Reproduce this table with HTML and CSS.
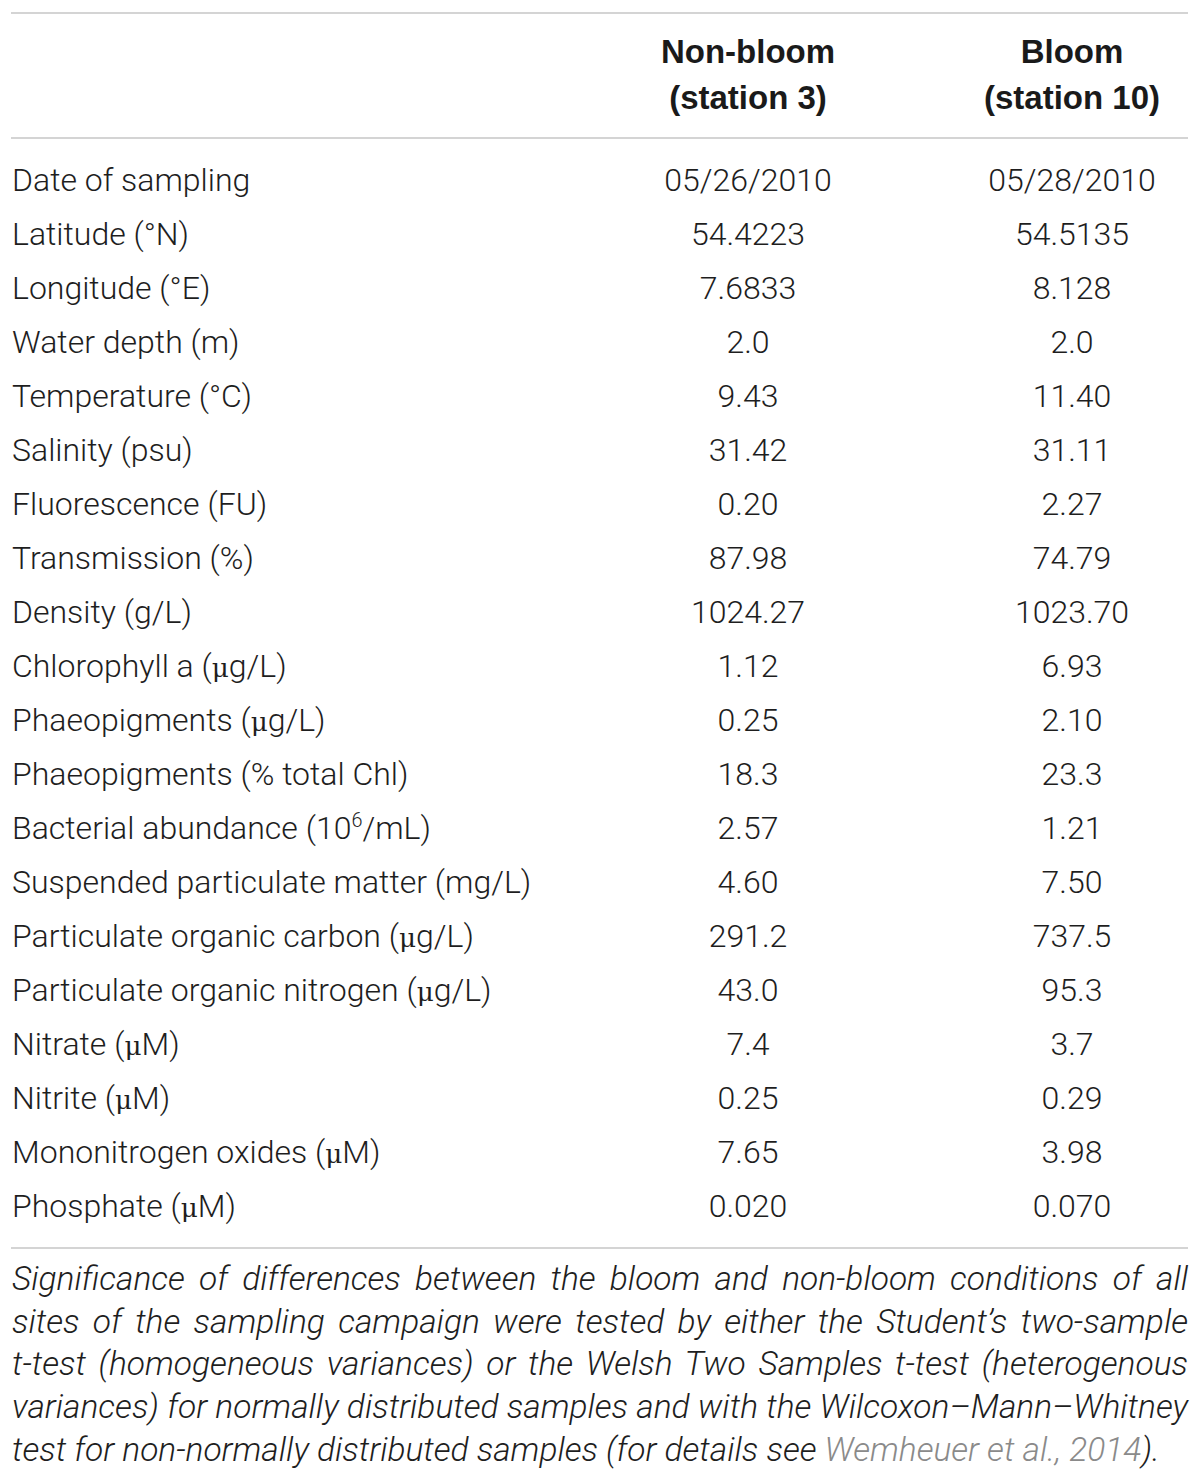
FILE: index.html
```html
<!DOCTYPE html>
<html lang="en">

<head>
    <meta charset="UTF-8">
    <meta name="viewport" content="width=device-width, initial-scale=1.0">
    <title>Sampling sites</title>
    <link rel="stylesheet" href="styles.css">
</head>

<body>
    <div class="table-wrap">

        <div class="row head-row">
            <div class="cell label"></div>
            <div class="cell value">Non-bloom<br>(station 3)</div>
            <div class="cell value">Bloom<br>(station 10)</div>
        </div>

        <div class="body-rows">
            <div class="row"><div class="cell label">Date of sampling</div><div class="cell value">05/26/2010</div><div class="cell value">05/28/2010</div></div>
            <div class="row"><div class="cell label">Latitude (°N)</div><div class="cell value">54.4223</div><div class="cell value">54.5135</div></div>
            <div class="row"><div class="cell label">Longitude (°E)</div><div class="cell value">7.6833</div><div class="cell value">8.128</div></div>
            <div class="row"><div class="cell label">Water depth (m)</div><div class="cell value">2.0</div><div class="cell value">2.0</div></div>
            <div class="row"><div class="cell label">Temperature (°C)</div><div class="cell value">9.43</div><div class="cell value">11.40</div></div>
            <div class="row"><div class="cell label">Salinity (psu)</div><div class="cell value">31.42</div><div class="cell value">31.11</div></div>
            <div class="row"><div class="cell label">Fluorescence (FU)</div><div class="cell value">0.20</div><div class="cell value">2.27</div></div>
            <div class="row"><div class="cell label">Transmission (%)</div><div class="cell value">87.98</div><div class="cell value">74.79</div></div>
            <div class="row"><div class="cell label">Density (g/L)</div><div class="cell value">1024.27</div><div class="cell value">1023.70</div></div>
            <div class="row"><div class="cell label">Chlorophyll a (<span class="mu">μ</span>g/L)</div><div class="cell value">1.12</div><div class="cell value">6.93</div></div>
            <div class="row"><div class="cell label">Phaeopigments (<span class="mu">μ</span>g/L)</div><div class="cell value">0.25</div><div class="cell value">2.10</div></div>
            <div class="row"><div class="cell label">Phaeopigments (% total Chl)</div><div class="cell value">18.3</div><div class="cell value">23.3</div></div>
            <div class="row"><div class="cell label">Bacterial abundance (10<sup>6</sup>/mL)</div><div class="cell value">2.57</div><div class="cell value">1.21</div></div>
            <div class="row"><div class="cell label">Suspended particulate matter (mg/L)</div><div class="cell value">4.60</div><div class="cell value">7.50</div></div>
            <div class="row"><div class="cell label">Particulate organic carbon (<span class="mu">μ</span>g/L)</div><div class="cell value">291.2</div><div class="cell value">737.5</div></div>
            <div class="row"><div class="cell label">Particulate organic nitrogen (<span class="mu">μ</span>g/L)</div><div class="cell value">43.0</div><div class="cell value">95.3</div></div>
            <div class="row"><div class="cell label">Nitrate (<span class="mu">μ</span>M)</div><div class="cell value">7.4</div><div class="cell value">3.7</div></div>
            <div class="row"><div class="cell label">Nitrite (<span class="mu">μ</span>M)</div><div class="cell value">0.25</div><div class="cell value">0.29</div></div>
            <div class="row"><div class="cell label">Mononitrogen oxides (<span class="mu">μ</span>M)</div><div class="cell value">7.65</div><div class="cell value">3.98</div></div>
            <div class="row"><div class="cell label">Phosphate (<span class="mu">μ</span>M)</div><div class="cell value">0.020</div><div class="cell value">0.070</div></div>
        </div>

        <p class="caption">
            <span class="line">Significance of differences between the bloom and non-bloom conditions of all</span>
            <span class="line">sites of the sampling campaign were tested by either the Student’s two-sample</span>
            <span class="line">t-test (homogeneous variances) or the Welsh Two Samples t-test (heterogenous</span>
            <span class="line">variances) for normally distributed samples and with the Wilcoxon–Mann–Whitney</span>
            <span class="line last">test for non-normally distributed samples (for details see <a class="ref" href="#">Wemheuer et al., 2014</a>).</span>
        </p>
    </div>
</body>

</html>
```

FILE: styles.css
```css
body {
    margin: 0;
    background-color: #ffffff;
    font-family: Roboto, "Liberation Sans", Arial, sans-serif;
    font-weight: 300;
    color: #1e1e1e;
}

.table-wrap {
    width: 1177px;
    margin: 12px 0 0 11px;
    border-top: 2px solid #d4d4d4;
}

.row {
    display: grid;
    grid-template-columns: 1fr 232px 232px;
    column-gap: 92px;
    height: 54px;
    font-size: 32px;
    line-height: 54px;
}

.head-row {
    height: auto;
    padding: 15px 0 16px;
    line-height: 46px;
    font-family: "Liberation Sans", Arial, sans-serif;
    font-size: 33px;
    font-weight: bold;
    color: #1a1a1a;
    border-bottom: 2px solid #d4d4d4;
}

.body-rows {
    padding: 14px 0;
    border-bottom: 2px solid #d4d4d4;
}

.cell.label {
    padding-left: 1px;
    white-space: nowrap;
}

.cell.value {
    text-align: center;
}

.mu {
    font-family: "DejaVu Serif", serif;
    font-size: 0.82em;
    line-height: 1;
}

sup {
    font-size: 0.62em;
    line-height: 0;
    vertical-align: 0.62em;
}

.caption {
    margin: 9px 0 0;
    padding-left: 1px;
    font-size: 33.5px;
    font-style: italic;
    line-height: 42.7px;
    color: #1e1e1e;
}

.line {
    display: block;
    white-space: nowrap;
    text-align: justify;
    text-align-last: justify;
}

.line.last {
    text-align-last: left;
}

.ref {
    color: #8a8a8a;
    text-decoration: none;
}
```
